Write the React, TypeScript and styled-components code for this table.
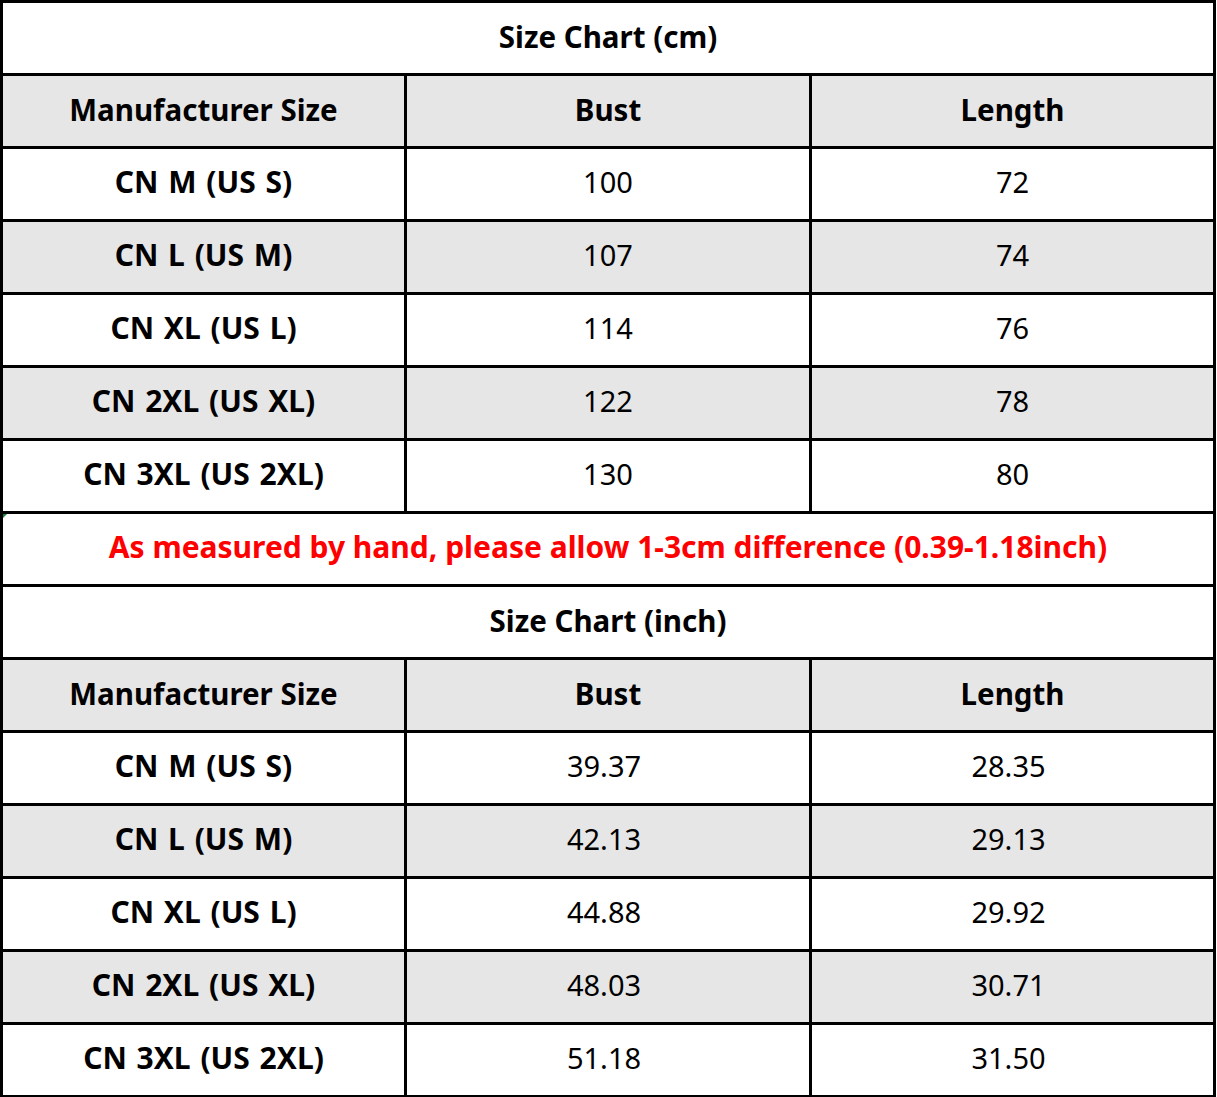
import * as React from 'react';
import styled, { createGlobalStyle } from 'styled-components';

const GlobalStyle = createGlobalStyle`
  html, body {
    margin: 0;
    padding: 0;
    background: #ffffff;
  }
`;

const colors = {
  line: '#000000',
  shade: '#e7e6e6',
  white: '#ffffff',
  red: '#ff0000',
  text: '#000000'
};

interface SizeRow {
  label: string;
  bust: string;
  length: string;
}

const cmRows: SizeRow[] = [
  { label: 'CN M (US S)', bust: '100', length: '72' },
  { label: 'CN L (US M)', bust: '107', length: '74' },
  { label: 'CN XL (US L)', bust: '114', length: '76' },
  { label: 'CN 2XL (US XL)', bust: '122', length: '78' },
  { label: 'CN 3XL (US 2XL)', bust: '130', length: '80' }
];

const inchRows: SizeRow[] = [
  { label: 'CN M (US S)', bust: '39.37', length: '28.35' },
  { label: 'CN L (US M)', bust: '42.13', length: '29.13' },
  { label: 'CN XL (US L)', bust: '44.88', length: '29.92' },
  { label: 'CN 2XL (US XL)', bust: '48.03', length: '30.71' },
  { label: 'CN 3XL (US 2XL)', bust: '51.18', length: '31.50' }
];

const Sheet = styled.div`
  width: 1216px;
  display: grid;
  grid-template-columns: 401px 402px 401px;
  grid-auto-rows: 70px;
  gap: 3px;
  padding: 3px;
  box-sizing: border-box;
  background: ${colors.line};
  font-family: 'Noto Sans', 'Open Sans', sans-serif;
  color: ${colors.text};
`;

const Cell = styled.div<{ $shade?: boolean; $bold?: boolean; $nudge?: number }>`
  position: relative;
  display: flex;
  align-items: center;
  justify-content: center;
  background: ${({ $shade }) => ($shade ? colors.shade : colors.white)};
  font-size: ${({ $bold }) => ($bold ? '30px' : '29px')};
  font-weight: ${({ $bold }) => ($bold ? 700 : 400)};
  word-spacing: ${({ $bold }) => ($bold ? '2px' : '0')};
  padding-bottom: 5px;
  padding-right: ${({ $nudge }) => ($nudge ? `${$nudge}px` : '0')};
  box-sizing: border-box;
  white-space: nowrap;
`;

const HeadCell = styled(Cell)`
  font-size: 29.5px;
  word-spacing: 0;
  padding-bottom: 3px;
`;

const Title = styled(Cell)`
  grid-column: 1 / -1;
  padding-bottom: 3px;
  word-spacing: 0;
  font-size: 29.5px;
`;

const Note = styled(Title)`
  color: ${colors.red};
  font-size: 30px;
  padding-bottom: 5px;
  &:before {
    content: '';
    position: absolute;
    left: 0;
    top: 0;
    border-top: 4px solid #1e7f3a;
    border-right: 4px solid transparent;
  }
`;

interface ChartProps {
  unit: string;
  rows: SizeRow[];
  nudge?: number;
}

const Chart = ({ unit, rows, nudge }: ChartProps) => (
  <>
    <Title $bold>Size Chart ({unit})</Title>
    <HeadCell $shade $bold>Manufacturer Size</HeadCell>
    <HeadCell $shade $bold>Bust</HeadCell>
    <HeadCell $shade $bold>Length</HeadCell>
    {rows.map((row, i) => (
      <React.Fragment key={row.label}>
        <Cell $shade={i % 2 === 1} $bold>{row.label}</Cell>
        <Cell $shade={i % 2 === 1} $nudge={nudge}>{row.bust}</Cell>
        <Cell $shade={i % 2 === 1} $nudge={nudge}>{row.length}</Cell>
      </React.Fragment>
    ))}
  </>
);

export default function App() {
  return (
    <>
      <GlobalStyle />
      <Sheet>
        <Chart unit="cm" rows={cmRows} />
        <Note $bold>As measured by hand, please allow 1-3cm difference (0.39-1.18inch)</Note>
        <Chart unit="inch" rows={inchRows} nudge={8} />
      </Sheet>
    </>
  );
}
